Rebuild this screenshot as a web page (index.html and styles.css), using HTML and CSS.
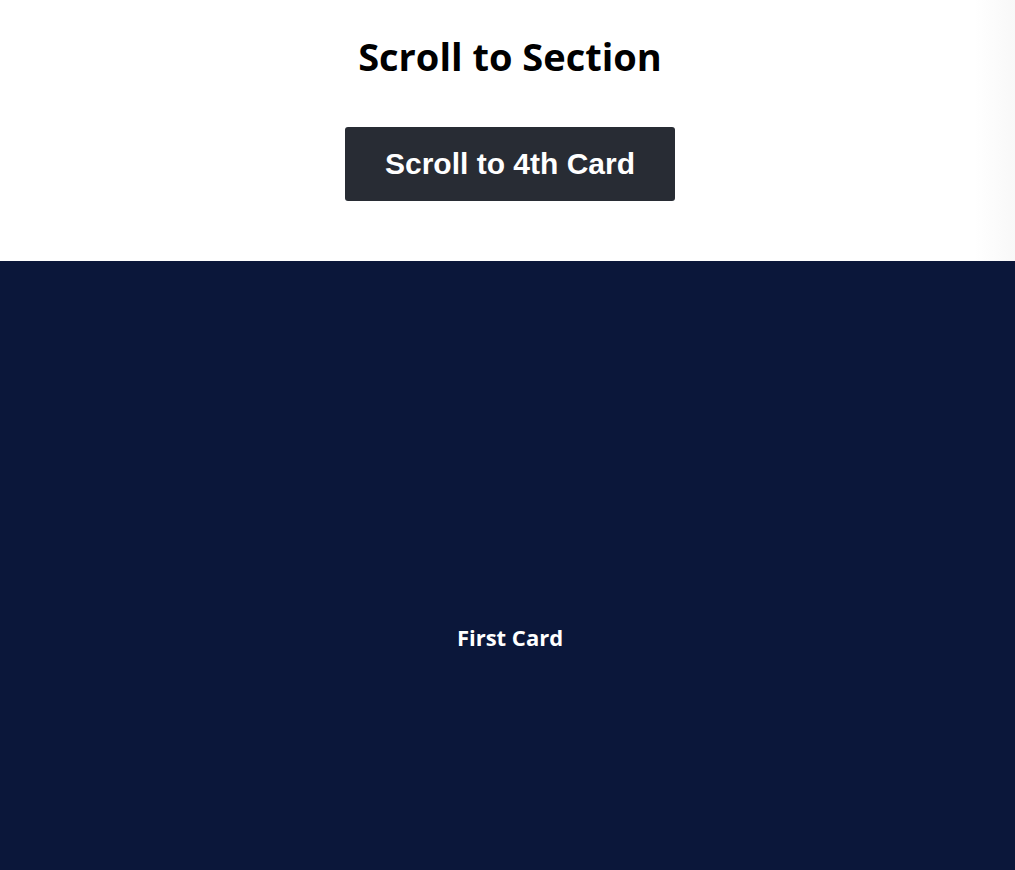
FILE: index.html
```html
<!DOCTYPE html>
<html>
<head>
<meta charset="utf-8">
<link rel="stylesheet" href="styles.css">
</head>
<body>
<header class="top">
  <h1 class="title">Scroll to Section</h1>
  <button class="scroll-btn">Scroll to 4th Card</button>
</header>
<section class="card card-first">
  <h2 class="card-label">First Card</h2>
</section>
</body>
</html>
```
FILE: styles.css
```css
html, body {
  margin: 0;
  padding: 0;
}
body {
  background: #ffffff;
  overflow: hidden;
  font-family: "Open Sans", "Noto Sans", sans-serif;
}
.top {
  display: flex;
  flex-direction: column;
  align-items: center;
  padding: 32px 0 60px 5px;
  background: linear-gradient(to right, #ffffff 0%, #ffffff 96%, #f8f8f8 100%);
}
.title {
  margin: 0;
  font-size: 38px;
  line-height: 48px;
  font-weight: 700;
  color: #000000;
}
.scroll-btn {
  margin-top: 47px;
  width: 330px;
  height: 74px;
  padding: 0;
  border: none;
  border-radius: 3px;
  background: #282c34;
  color: #ffffff;
  font-family: "Liberation Sans", Arial, sans-serif;
  font-size: 30px;
  font-weight: 700;
  cursor: pointer;
}
.card {
  display: flex;
  align-items: center;
  justify-content: center;
  height: 752px;
  padding-left: 5px;
}
.card-first {
  background: #0b173a;
}
.card-label {
  margin: 0;
  color: #ffffff;
  font-size: 22px;
  font-weight: 700;
}
```
